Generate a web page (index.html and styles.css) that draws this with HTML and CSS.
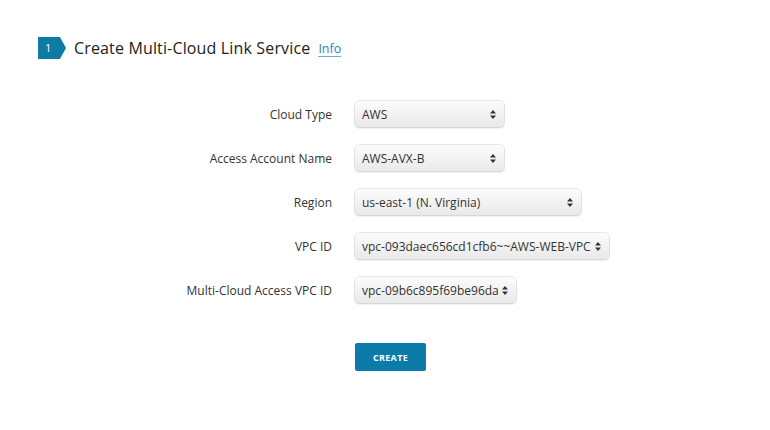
FILE: index.html
```html
<!DOCTYPE html>
<html>
<head>
<meta charset="utf-8">
<link rel="stylesheet" href="styles.css">
</head>
<body>
<div class="page">
  <div class="header">
    <div class="step">1</div>
    <h1 class="title">Create Multi-Cloud Link Service</h1>
    <a class="info">Info</a>
  </div>
  <form class="form">
    <div class="row">
      <label class="label">Cloud Type</label>
      <div class="select w-cloud"><span>AWS</span><svg class="arrows" width="6" height="9" viewBox="0 0 6 9"><path d="M3 0L6 3.5H0Z M3 9L6 5.5H0Z" fill="#333"/></svg></div>
    </div>
    <div class="row">
      <label class="label">Access Account Name</label>
      <div class="select w-account"><span>AWS-AVX-B</span><svg class="arrows" width="6" height="9" viewBox="0 0 6 9"><path d="M3 0L6 3.5H0Z M3 9L6 5.5H0Z" fill="#333"/></svg></div>
    </div>
    <div class="row">
      <label class="label">Region</label>
      <div class="select w-region"><span>us-east-1 (N. Virginia)</span><svg class="arrows" width="6" height="9" viewBox="0 0 6 9"><path d="M3 0L6 3.5H0Z M3 9L6 5.5H0Z" fill="#333"/></svg></div>
    </div>
    <div class="row">
      <label class="label">VPC ID</label>
      <div class="select w-vpc"><span>vpc-093daec656cd1cfb6~~AWS-WEB-VPC</span><svg class="arrows" width="6" height="9" viewBox="0 0 6 9"><path d="M3 0L6 3.5H0Z M3 9L6 5.5H0Z" fill="#333"/></svg></div>
    </div>
    <div class="row">
      <label class="label">Multi-Cloud Access VPC ID</label>
      <div class="select w-access"><span>vpc-09b6c895f69be96da</span><svg class="arrows" width="6" height="9" viewBox="0 0 6 9"><path d="M3 0L6 3.5H0Z M3 9L6 5.5H0Z" fill="#333"/></svg></div>
    </div>
    <div class="actions">
      <button type="button" class="btn">CREATE</button>
    </div>
  </form>
</div>
</body>
</html>
```
FILE: styles.css
```css
html, body {
  margin: 0;
  padding: 0;
  background: #fff;
}
body {
  font-family: "Open Sans", "Liberation Sans", sans-serif;
  color: #333;
}
.page {
  padding: 37px 0 0 38px;
}
.header {
  display: flex;
  align-items: center;
  height: 22px;
}
.step {
  width: 22px;
  height: 22px;
  background: #0e7aa6;
  color: #fff;
  font-size: 11px;
  line-height: 22px;
  padding-left: 7px;
  box-sizing: border-box;
  position: relative;
}
.step::after {
  content: "";
  position: absolute;
  left: 22px;
  top: 0;
  border-left: 6px solid #0e7aa6;
  border-top: 11px solid transparent;
  border-bottom: 11px solid transparent;
}
.title {
  margin: 0 0 0 14px;
  font-size: 16px;
  font-weight: 400;
  color: #222;
  letter-spacing: 0.15px;
}
.info {
  margin-left: 8px;
  font-size: 12.5px;
  color: #2a86b8;
  border-bottom: 1px solid #6aaed0;
  line-height: 14px;
  padding-top: 2px;
}
.form {
  margin: 42px 0 0 0;
  display: flex;
  flex-direction: column;
  gap: 18px;
}
.row {
  display: flex;
  align-items: center;
  height: 26px;
}
.label {
  width: 294px;
  text-align: right;
  font-size: 12px;
  color: #333;
  margin-right: 23px;
}
.select {
  height: 26px;
  box-sizing: border-box;
  border-radius: 4px;
  background: linear-gradient(#fcfcfc, #e9e9e9);
  box-shadow: 0 0 0 0.5px #cfcfcf, 0 1px 2px rgba(0,0,0,0.18);
  display: flex;
  align-items: center;
  justify-content: space-between;
  padding: 0 8px 0 7px;
  font-size: 12px;
  color: #333;
}
.arrows { flex: none; }
.w-cloud { width: 149px; }
.w-account { width: 149px; }
.w-region { width: 226px; }
.w-vpc { width: 254px; }
.w-access { width: 161px; }
.actions {
  margin: 22px 0 0 317px;
}
.btn {
  width: 71px;
  height: 28px;
  border: none;
  border-radius: 2px;
  background: #0b7ba8;
  color: #fff;
  font-family: "Open Sans", sans-serif;
  font-weight: 700;
  font-size: 9px;
  letter-spacing: 0.3px;
  padding: 0;
}
```
